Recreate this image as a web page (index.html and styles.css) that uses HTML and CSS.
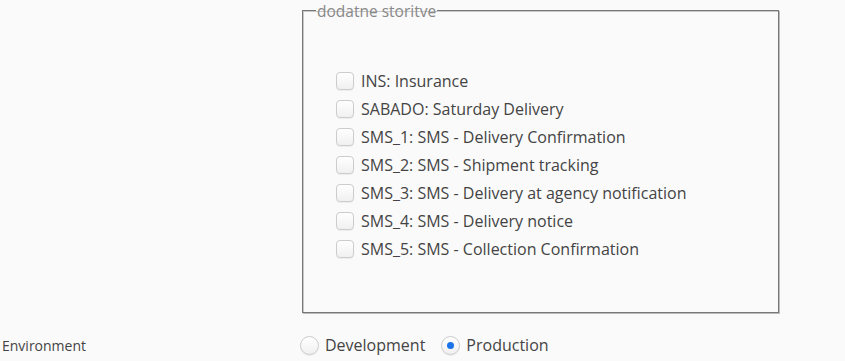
FILE: index.html
```html
<!DOCTYPE html>
<html lang="en">
<head>
    <meta charset="UTF-8">
    <title>Nastavitve</title>
    <link rel="stylesheet" href="styles.css">
</head>
<body>
    <div class="form-row">
        <div class="label-col"></div>
        <div class="field-col">
            <fieldset class="services">
                <legend>dodatne storitve</legend>
                <ul class="check-list">
                    <li><label><span class="check"></span>INS: Insurance</label></li>
                    <li><label><span class="check"></span>SABADO: Saturday Delivery</label></li>
                    <li><label><span class="check"></span>SMS_1: SMS - Delivery Confirmation</label></li>
                    <li><label><span class="check"></span>SMS_2: SMS - Shipment tracking</label></li>
                    <li><label><span class="check"></span>SMS_3: SMS - Delivery at agency notification</label></li>
                    <li><label><span class="check"></span>SMS_4: SMS - Delivery notice</label></li>
                    <li><label><span class="check"></span>SMS_5: SMS - Collection Confirmation</label></li>
                </ul>
            </fieldset>
        </div>
    </div>

    <div class="form-row env-row">
        <div class="label-col">Environment</div>
        <div class="field-col radios">
            <label class="radio-item"><span class="radio"></span>Development</label>
            <label class="radio-item"><span class="radio selected"></span>Production</label>
        </div>
    </div>
</body>
</html>
```

FILE: styles.css
```css
body {
    margin: 0;
    padding: 0;
    background-color: #fafafa;
    color: #444;
    font-family: 'Open Sans', sans-serif;
}

.form-row {
    display: flex;
}

.label-col {
    width: 300px;
    box-sizing: border-box;
    flex-shrink: 0;
    font-size: 14px;
    color: #444;
}

.field-col {
    flex: 1;
}

.services {
    box-sizing: border-box;
    width: 477px;
    height: 313px;
    margin: 0 0 0 2px;
    padding: 0;
    border: 1px solid #777;
    box-shadow: inset 1px 1px 0 #c8c8c8, 1px 1px 0 #bbb;
}

.services legend {
    margin-left: 13px;
    padding: 2px 1px 0;
    font-size: 15.5px;
    color: #888;
    line-height: 18px;
}

.check-list {
    list-style: none;
    margin: 0;
    padding: 47px 0 0 33px;
}

.check-list li {
    height: 28px;
    font-size: 16px;
    display: flex;
    align-items: center;
}

.check-list label {
    display: flex;
    align-items: center;
}

.check {
    width: 18px;
    height: 18px;
    box-sizing: border-box;
    margin-right: 7px;
    border: 1px solid #ccc;
    border-radius: 4px;
    background: linear-gradient(#fff, #f0f0f0);
    box-shadow: 0 1px 1px rgba(0, 0, 0, 0.06);
}

.env-row {
    margin-top: 20px;
    align-items: center;
    height: 24px;
}

.env-row .label-col {
    padding-left: 2px;
}

.radios {
    display: flex;
    align-items: center;
    gap: 16px;
    font-size: 16px;
}

.radio-item {
    display: flex;
    align-items: center;
}

.radio {
    width: 19px;
    height: 19px;
    box-sizing: border-box;
    margin-right: 6px;
    border: 1px solid #ccc;
    border-radius: 50%;
    background: linear-gradient(#fff, #f0f0f0);
    box-shadow: 0 1px 1px rgba(0, 0, 0, 0.06);
    position: relative;
}

.radio.selected::after {
    content: "";
    position: absolute;
    left: 5px;
    top: 5px;
    width: 7px;
    height: 7px;
    border-radius: 50%;
    background: #1a73e8;
}
```
